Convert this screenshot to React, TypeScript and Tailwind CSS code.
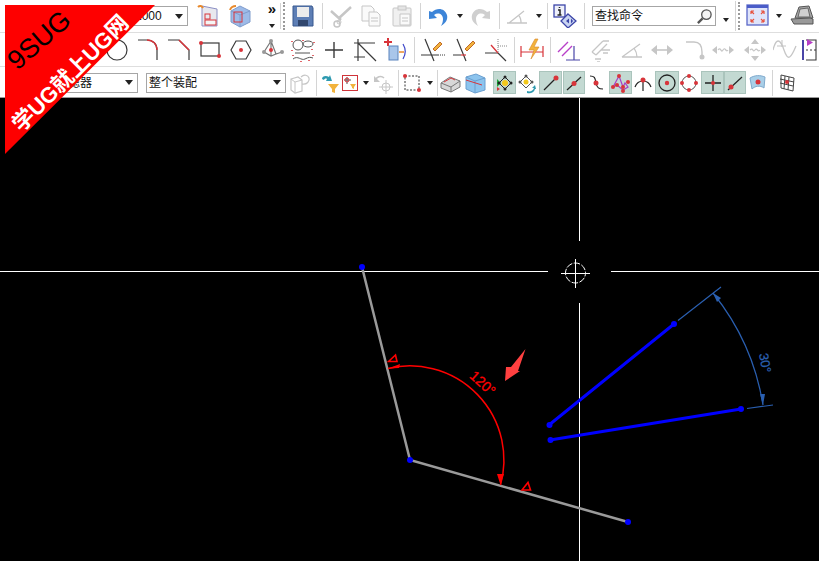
import type { ReactNode } from "react"

const cjk = "font-['Liberation_Sans','Noto_Sans_CJK_SC',sans-serif]"

// one toolbar glyph, drawn on a 24 box
function I({ c = "", children }: { c?: string; children: ReactNode }) {
  return (
    <svg viewBox="0 0 24 24" fill="none" className={`shrink-0 w-6 h-6 ${c}`}>
      {children}
    </svg>
  )
}

function Small({ c = "", children }: { c?: string; children: ReactNode }) {
  return (
    <svg viewBox="0 0 20 24" fill="none" className={`shrink-0 w-5 h-6 ${c}`}>
      {children}
    </svg>
  )
}

function Sep({ c = "" }: { c?: string }) {
  return <div className={`shrink-0 w-px h-[26px] bg-[#d4d4d4] ${c}`} />
}

function Grip({ c = "" }: { c?: string }) {
  return <div className={`shrink-0 w-[3px] h-[28px] border-l-2 border-dotted border-[#9a9a9a] ${c}`} />
}

function Drop({ c = "" }: { c?: string }) {
  return <div className={`shrink-0 w-0 h-0 border-x-[3.5px] border-x-transparent border-t-[4px] border-t-[#222] ${c}`} />
}

function Combo({ c = "", text, pad = "pl-1" }: { c?: string; text: string; pad?: string }) {
  return (
    <div className={`shrink-0 h-5 border border-[#a6a6a6] bg-white flex items-center justify-between pr-1 text-xs text-[#111] ${pad} ${c} ${cjk}`}>
      <span className="whitespace-nowrap">{text}</span>
      <div className="w-0 h-0 border-x-[4.5px] border-x-transparent border-t-[5px] border-t-[#222]" />
    </div>
  )
}

function Toggle({ c = "", children }: { c?: string; children: ReactNode }) {
  return (
    <div className={`shrink-0 h-[23px] bg-[#c3d9d2] border border-[#aac4bc] flex items-center justify-center ${c}`}>
      <svg viewBox="0 0 20 20" fill="none" className="w-5 h-5">
        {children}
      </svg>
    </div>
  )
}

const Dot = ({ x, y, r = 2 }: { x: number; y: number; r?: number }) => <circle cx={x} cy={y} r={r} fill="#d8343a" />
const dark = "#3a3a3a"
const off = "#c6c6c6"

function Row1() {
  return (
    <div className="h-[33px] border-b border-[#dedede] flex items-center overflow-hidden">
      <Combo c="ml-[100px] w-[88px]" text="0.1000" pad="pl-6" />
      <I c="ml-[9px]">
        <path d="M5 2l15 3v17H5z" fill="#e8e8ee" stroke="#8b8fc4" />
        <path d="M1 3c2-2 4-1 5 1" stroke="#e8892c" strokeWidth="2" />
        <rect x="8" y="10" width="5" height="5" stroke="#d8343a" />
        <rect x="8" y="16" width="11" height="5" stroke="#d8343a" fill="#f5f5f5" />
      </I>
      <I c="ml-[7px]">
        <path d="M3 7l9-5 10 5v11l-10 5-9-5z" fill="#9dbbe8" stroke="#7f9ccc" />
        <path d="M3 7l9 4 10-4M12 11v12" stroke="#7f9ccc" />
        <rect x="6" y="8" width="8" height="10" stroke="#d8343a" />
        <path d="M2 6c1-3 4-4 6-4" stroke="#e8892c" strokeWidth="2" />
      </I>
      <div className="ml-[13px] w-[14px] h-6 shrink-0 flex flex-col items-center justify-between">
        <span className="text-[15px] leading-[10px] font-bold text-[#111] font-['Liberation_Sans',sans-serif]">»</span>
        <Drop />
      </div>
      <Sep c="ml-px" />
      <Grip c="ml-[2px]" />
      <I c="ml-[5px]">
        <path d="M2 2h19l1 2v18H2z" fill="#5d7eb5" stroke="#38598f" />
        <rect x="6" y="3" width="12" height="10" fill="#ececec" />
        <rect x="7" y="16" width="10" height="6" fill="#30466e" />
      </I>
      <Sep c="ml-[7px]" />
      <I c="ml-[5px]">
        <path d="M3 7l10 9M23 3L10 15" stroke={off} strokeWidth="2.5" />
        <circle cx="9" cy="20" r="3" stroke={off} strokeWidth="1.5" />
        <circle cx="11" cy="18" r="2" stroke={off} />
      </I>
      <I c="ml-[7px]">
        <path d="M3 2h9l3 3v12H3z" fill="#fafafa" stroke={off} />
        <path d="M10 8h8l3 3v11H10z" fill="#fafafa" stroke={off} />
        <path d="M12 14h7M12 17h7" stroke={off} />
      </I>
      <I c="ml-[7px]">
        <rect x="3" y="4" width="18" height="18" rx="1" fill="#f0f0f0" stroke={off} />
        <rect x="8" y="2" width="8" height="4" fill="#e4e4e4" stroke={off} />
        <path d="M10 10h10v11H10zM12 14h6M12 17h6" stroke={off} fill="#fafafa" />
      </I>
      <Sep c="ml-[6px]" />
      <I c="ml-[5px]">
        <path d="M3 7l0 8 8-1-3-3c4-3 9-1 9 4 0 3-1 5-2 7 5-3 7-7 6-11-2-7-10-8-15-3z" fill="#3d85d8" />
      </I>
      <Drop c="ml-[7px]" />
      <I c="ml-[6px]">
        <path d="M21 7l0 8-8-1 3-3c-4-3-9-1-9 4 0 3 1 5 2 7-5-3-7-7-6-11 2-7 10-8 15-3z" fill="#cfcfcf" />
      </I>
      <Sep c="ml-[6px]" />
      <I c="ml-[5px]">
        <path d="M2 19h20M4 19L19 7M14 12c2 2 2 5 2 7" stroke={off} strokeWidth="1.3" />
      </I>
      <Drop c="ml-[7px]" />
      <Sep c="ml-[5px]" />
      <I c="ml-[5px]">
        <rect x="1" y="1" width="11" height="12" fill="#eef0fa" stroke="#3c45a8" strokeWidth="1.3" />
        <path d="M6.500 3v1M5 6h2v5M4.500 11h4" stroke="#222" strokeWidth="1.500" />
        <path d="M15 10l8 7-8 7-7-7z" fill="#c9d4f2" stroke="#3c45a8" strokeWidth="1.3" />
        <path d="M13 17l3-2.500v5zM18 14.500v5l2-2.500z" fill="#3c45a8" />
      </I>
      <Sep c="ml-[7px]" />
      <div className={`ml-[7px] shrink-0 w-[124px] h-5 border border-[#a6a6a6] bg-white flex items-center justify-between pl-[2px] pr-[2px] text-xs text-[#111] ${cjk}`}>
        <span className="whitespace-nowrap">查找命令</span>
        <svg viewBox="0 0 18 18" fill="none" className="w-[17px] h-[17px]">
          <circle cx="11" cy="7" r="5" fill="#f4f4f4" stroke="#555" strokeWidth="1.4" />
          <path d="M7 11l-5 5" stroke="#555" strokeWidth="2.4" />
        </svg>
      </div>
      <Drop c="ml-[7px] mt-[8px]" />
      <Sep c="ml-[6px] h-[30px]" />
      <Grip c="ml-[2px]" />
      <I c="ml-[5px]">
        <rect x="1" y="1" width="21" height="20" fill="#dfe4fa" stroke="#5a68c8" strokeWidth="1.3" />
        <rect x="1" y="1" width="21" height="3" fill="#4a5cc8" />
        <path d="M5 7l3 3M5 7h3M5 7v3M18 7l-3 3M18 7h-3M18 7v3M5 18l3-3M5 18h3M5 18v-3M18 18l-3-3M18 18h-3M18 18v-3" stroke="#e8503c" strokeWidth="1.2" />
      </I>
      <Drop c="ml-[6px]" />
      <I c="ml-[8px]">
        <path d="M5 14l4-11 10-1 4 12z" fill="#a8a8a8" stroke="#555" />
        <path d="M1 15l19-1 3 1v5H4z" fill="#999" stroke="#555" />
        <path d="M8 13l2-8 8-1 2 9z" fill="#d0d0d0" stroke="#666" />
      </I>
    </div>
  )
}

function Row2() {
  return (
    <div className="h-[34px] border-b border-[#dedede] flex items-center overflow-hidden">
      <I c="ml-[105px]">
        <circle cx="12" cy="12" r="10" stroke={dark} strokeWidth="1.2" />
      </I>
      <I c="ml-[7px]">
        <path d="M2 2h9c6 0 10 4 10 10v10" stroke={dark} strokeWidth="1.2" />
        <path d="M11 2c6 0 10 4 10 10" stroke="#d8343a" strokeWidth="1.3" />
      </I>
      <I c="ml-[7px]">
        <path d="M1 2h11l10 10v10" stroke={dark} strokeWidth="1.2" />
        <path d="M12 2l10 10" stroke="#d8343a" strokeWidth="1.5" />
      </I>
      <I c="ml-[7px]">
        <rect x="3" y="5" width="18" height="13" stroke={dark} strokeWidth="1.2" />
        <Dot x={3} y={5} />
        <Dot x={21} y={18} />
      </I>
      <I c="ml-[7px]">
        <path d="M2 12l5-9h10l5 9-5 9H7z" stroke={dark} strokeWidth="1.2" />
        <Dot x={12} y={12} />
      </I>
      <I c="ml-[7px]">
        <path d="M4 14l7-11 5 13 6-2M4 14l7 4 5-2M11 3l0 15" stroke="#777" strokeWidth="1.2" />
        <circle cx="4" cy="14" r="2" fill="#999" />
        <circle cx="11" cy="3" r="2" fill="#999" />
        <circle cx="22" cy="14" r="2" fill="#999" />
        <Dot x={11} y={12} />
      </I>
      <I c="ml-[7px]">
        <ellipse cx="7" cy="7" rx="5" ry="5" stroke="#555" />
        <ellipse cx="17" cy="6" rx="5" ry="3" stroke="#555" />
        <path d="M4 15h15M2 21c5-4 8 2 12 0s5-2 8-1" stroke="#555" />
        <path d="M1 3v1M12 2v1M23 4v1M1 12v1M21 11v1M2 17v1M22 17v1M10 23v1M18 22v1" stroke="#d8343a" strokeWidth="1.5" />
      </I>
      <I c="ml-[7px]">
        <path d="M12 4v16M3 12h18" stroke={dark} strokeWidth="1.4" />
      </I>
      <I c="ml-[7px]">
        <path d="M5 1v22M1 5h21M1 19h11M5 5l18 18" stroke={dark} strokeWidth="1.2" />
      </I>
      <I c="ml-[7px]">
        <path d="M0 4h8M4 0v8" stroke="#d8343a" strokeWidth="2" />
        <rect x="5" y="8" width="9" height="14" fill="#a9c6ea" stroke="#5b84bd" />
        <path d="M15 14h5" stroke="#e8892c" strokeWidth="1.5" />
        <path d="M19 6c3 5 3 10 0 15" stroke="#3c45c8" strokeWidth="1.2" />
      </I>
      <Sep c="ml-[6px]" />
      <I c="ml-[6px]">
        <path d="M4 1l9 22M0 17h17" stroke={dark} strokeWidth="1.2" />
        <path d="M17 17h7" stroke={dark} strokeDasharray="1 1" />
        <path d="M12 11l7-7 2 2-7 7z" fill="#f2b33c" stroke="#c06a2a" />
      </I>
      <I c="ml-[8px]">
        <path d="M4 1l9 22M0 17h8" stroke={dark} strokeWidth="1.2" />
        <path d="M8 17h5" stroke="#d8343a" strokeWidth="1.2" />
        <path d="M12 11l8-8 2 2-8 8z" fill="#f2b33c" stroke="#c06a2a" />
      </I>
      <I c="ml-[8px]">
        <path d="M0 15h13M13 15l8 8" stroke={dark} strokeWidth="1.2" />
        <path d="M6 7l7 8" stroke="#d8343a" strokeWidth="1.3" />
        <path d="M13 1v14M13 8h9" stroke="#888" strokeDasharray="1 1" />
      </I>
      <Sep c="ml-[5px]" />
      <I c="ml-[5px]">
        <path d="M1 8v11M23 8v11M1 14h22" stroke="#d8343a" strokeWidth="1.2" />
        <path d="M15 1l-6 11h5l-3 9 8-12h-5l4-8z" fill="#f2b33c" stroke="#d8862a" strokeWidth=".6" />
      </I>
      <Sep c="ml-[6px]" />
      <I c="ml-[5px]">
        <path d="M2 14L12 4M6 18L16 8" stroke="#b83fc8" strokeWidth="1.4" />
        <path d="M18 8v14M10 22h14" stroke="#4a46a8" strokeWidth="1.2" />
      </I>
      <I c="ml-[8px]">
        <path d="M4 14L15 3M8 17L19 6M4 14l4 3M15 3h6M7 21h6M9 24h3M13 12h9M15 15h5" stroke={off} strokeWidth="1.3" />
      </I>
      <I c="ml-[8px]">
        <path d="M2 19h20M2 19L20 6M14 10c2 3 3 6 3 9" stroke={off} strokeWidth="1.3" />
      </I>
      <I c="ml-[6px]">
        <path d="M4 12h16" stroke={off} strokeWidth="1.6" />
        <path d="M1 12l6-5v10zM23 12l-6-5v10z" fill={off} />
      </I>
      <I c="ml-[9px]">
        <path d="M3 4h8c6 0 8 4 8 10v4" stroke={off} strokeWidth="1.4" />
        <circle cx="19" cy="19" r="2.500" fill={off} />
      </I>
      <I c="ml-[4px]">
        <path d="M7 12c3-4 3 4 5 0s3 3 5 0" stroke={off} strokeWidth="1.2" />
        <path d="M1 12l5-4v8zM23 12l-5-4v8z" fill={off} />
      </I>
      <I c="ml-[8px]">
        <path d="M7 12c3-3 3 3 5 0s3 3 5 0" stroke={off} strokeWidth="1.2" />
        <path d="M1 12l5-4v8zM23 12l-5-4v8zM12 1l-4 5h8zM12 23l-4-5h8z" fill={off} />
      </I>
      <I c="ml-[6px]">
        <path d="M0 12c3-12 7-12 11 0s7 8 12-4" stroke={off} strokeWidth="1.3" />
        <path d="M4 8h9M9 2v7" stroke={off} strokeWidth="1.1" />
      </I>
      <I c="ml-[3px]">
        <rect x="2" y="2" width="2" height="20" fill="#4a46a8" />
        <path d="M6 2h10v20H6" stroke={dark} strokeWidth="1.1" />
        <path d="M7 1v7l6-3.500z" fill="#b83fc8" />
        <path d="M6 12h12" stroke={dark} strokeDasharray="2 2" />
      </I>
    </div>
  )
}

function Row3() {
  return (
    <div className="h-[31px] pt-px border-b border-[#9a9a9a] flex items-center overflow-hidden">
      <Combo c="ml-[6px] w-[132px]" text="没有选择过滤器" pad="pl-[1px]" />
      <Combo c="ml-[8px] w-[140px]" text="整个装配" pad="pl-[2px]" />
      <I c="ml-[2px]">
        <path d="M3 8l7-2 4 3v11l-7 2-4-3zM13 6c3-3 7-2 8 1s-2 7-7 6" stroke={off} strokeWidth="1.2" />
        <path d="M3 8l4 3v11M7 11l7-2" stroke={off} />
      </I>
      <Sep c="ml-[4px]" />
      <Small c="ml-[3px]">
        <path d="M2 8c0-3 4-4 7-2l1-2 2 6-6 0 1-2c-1-1-3 0-3 1z" fill="#2e9ab0" />
        <path d="M8 13h11l-4 5v4l-3-1v-3z" fill="#f2b33c" />
      </Small>
      <div className="ml-[2px] shrink-0 w-4 h-4 border border-[#d0343a] bg-white flex items-center justify-center">
        <svg viewBox="0 0 14 14" fill="none" className="w-[14px] h-[14px]">
          <path d="M4 1v7M1 4h7" stroke="#555" />
          <circle cx="4" cy="4" r="2" stroke="#d8343a" />
          <path d="M7 8h6l-2 3v2l-2-1v-1z" fill="#f2b33c" />
        </svg>
      </div>
      <Drop c="ml-[5px]" />
      <I c="ml-[3px]">
        <path d="M4 9c0-3 5-5 8-2" stroke={off} strokeWidth="1.6" />
        <path d="M2 5v6h6z" fill={off} />
        <circle cx="14" cy="16" r="4" stroke={off} />
        <path d="M14 9v14M7 16h14" stroke={off} />
      </I>
      <Sep c="ml-[2px]" />
      <Small c="ml-[3px]">
        <rect x="3" y="5" width="14" height="14" stroke="#333" strokeDasharray="2 1.500" />
        <Dot x={3} y={5} />
        <Dot x={17} y={19} />
      </Small>
      <Drop c="ml-[5px]" />
      <Sep c="ml-[4px]" />
      <I c="ml-px">
        <path d="M2 12l9-6 10 4v6l-9 5-10-4z" fill="#d8d8d8" stroke="#777" />
        <path d="M2 12l10 4 9-6M12 16v5" stroke="#777" />
        <path d="M5 11l7-4 4 2" stroke="#d8343a" />
      </I>
      <I>
        <path d="M3 6l10-3 9 4v12l-10 3-9-4z" fill="#8cc4ee" stroke="#6a9fd0" />
        <path d="M3 6l9 4 10-3M12 10v12" stroke="#6a9fd0" />
        <path d="M3 9l16 5" stroke="#d8343a" />
      </I>
      <Toggle c="ml-[6px] w-[23px]">
        <path d="M2 6v8l4-4z" fill="#18a838" />
        <path d="M2 14v4l3-2z" fill="#d8343a" />
        <path d="M10 4l6 6-6 6-6-6z" stroke="#222" />
        <circle cx="10" cy="10" r="3" fill="#f2c81c" />
        <circle cx="10" cy="4" r="1.500" fill="#222" />
        <circle cx="16" cy="10" r="1.500" fill="#222" />
        <circle cx="10" cy="16" r="1.500" fill="#222" />
        <circle cx="4" cy="10" r="1.500" fill="#222" />
      </Toggle>
      <Small>
        <path d="M10 5l6 6-6 6-6-6z" stroke="#555" />
        <circle cx="10" cy="11" r="2.500" fill="#f2c81c" />
        <circle cx="10" cy="5" r="1.500" fill="#555" />
        <circle cx="16" cy="11" r="1.500" fill="#555" />
        <circle cx="4" cy="11" r="1.500" fill="#555" />
        <path d="M11 20c3 1 6 0 7-3l-2 0 3-3 1 4h-1c-1 4-5 5-8 4z" fill="#2e9ab0" />
      </Small>
      <Toggle c="ml-[3px] w-[23px]">
        <path d="M3 17L16 4" stroke="#222" strokeWidth="1.2" />
        <Dot x={15} y={5} r={2.5} />
      </Toggle>
      <Toggle c="ml-px w-[22px]">
        <path d="M3 17L17 4" stroke="#222" strokeWidth="1.2" />
        <Dot x={10} y={10.500} r={2.5} />
      </Toggle>
      <Small c="ml-px">
        <path d="M4 5c5 0 5 2 6 7s3 6 7 6" stroke="#222" strokeWidth="1.2" />
        <Dot x={10} y={12} r={2.500} />
      </Small>
      <Toggle c="ml-[3px] w-[23px]">
        <path d="M2 14L8 3l4 11 2-4 3 4-5 3-6-5z" stroke="#a63fc8" strokeWidth="1.2" />
        <Dot x={2} y={14} />
        <Dot x={8} y={3} />
        <Dot x={12} y={14} />
        <Dot x={17} y={9} />
        <Dot x={12} y={18} />
        <Dot x={6} y={12} />
      </Toggle>
      <Small c="ml-px">
        <path d="M2 16c3-8 13-8 16 0M10 9v11" stroke="#222" strokeWidth="1.2" />
        <Dot x={10} y={9} r={2.500} />
      </Small>
      <Toggle c="ml-[2px] w-6">
        <circle cx="10" cy="10" r="8" stroke="#222" strokeWidth="1.3" />
        <Dot x={10} y={10} r={2.2} />
      </Toggle>
      <Small>
        <circle cx="10" cy="12" r="7" stroke="#555" />
        <Dot x={10} y={5} />
        <Dot x={3} y={12} />
        <Dot x={17} y={12} />
        <Dot x={10} y={19} />
      </Small>
      <Toggle c="ml-[2px] w-[23px]">
        <path d="M10 2v16M2 10h16" stroke="#222" strokeWidth="1.3" />
        <Dot x={10} y={10} />
      </Toggle>
      <Toggle c="w-[22px]">
        <path d="M3 17L17 4" stroke="#222" strokeWidth="1.2" />
        <Dot x={6} y={14} r={2.5} />
      </Toggle>
      <Small c="ml-px">
        <path d="M3 7c5-3 10-3 15-1l-1 11c-4-3-9-2-12 1z" fill="#a9cfe8" stroke="#7fa9cc" />
        <Dot x={11} y={11} r={2.500} />
      </Small>
      <Sep c="ml-[5px]" />
      <I c="ml-[2px]">
        <path d="M6 4l13 3-1 13-12-3zM10 5l-1 13M14 6l-1 13M5 8l14 3M5 12l13 3" stroke="#444" />
        <Dot x={12} y={11} />
      </I>
    </div>
  )
}

function Canvas() {
  const blue = "#2a5fb0"
  return (
    <div className="flex-1 bg-black overflow-hidden">
      <svg viewBox="0 98 819 463" className="block w-[819px] h-[463px]" fill="none">
        <path d="M0 271.500H548M611 271.500H819M579.500 98V241M579.500 303V561" stroke="#fff" />
        <circle cx="575.500" cy="273" r="10" stroke="#fff" strokeDasharray="6.500 1.500" strokeDashoffset="3" />
        <path d="M561 273.500H590M575.500 259V288" stroke="#fff" />

        <path d="M362 267L410 460L628 522" stroke="#9a9a9a" strokeWidth="2.500" />
        <circle cx="362" cy="267" r="3" fill="#0000ff" />
        <circle cx="410" cy="460" r="3" fill="#0000ff" />
        <circle cx="628" cy="522" r="3" fill="#0000ff" />

        <path d="M388 368.500A94 94 0 0 1 500.500 485" stroke="#ff0000" strokeWidth="1.500" />
        <path d="M388 368.500L400 364L399 368zM500.500 485L497 474L504 474z" fill="#ff0000" />
        <path d="M388.500 361.500L395.500 355L397 361.500z" stroke="#ff0000" strokeWidth="1.600" />
        <path d="M522 490L528 482.500L530.500 490z" stroke="#ff0000" strokeWidth="1.600" />
        <text x="482" y="384" fill="#ff0000" stroke="#ff0000" strokeWidth=".3" fontSize="14" textAnchor="middle" dominantBaseline="middle" transform="rotate(42 482 384)" className="font-['Liberation_Sans',sans-serif]">120°</text>
        <path d="M505 381L506 367L511 367L525.500 349L518 371L520 371z" fill="#ff4040" />

        <path d="M549 425L674 324M550 440L741 409" stroke="#0000ff" strokeWidth="3" />
        <circle cx="549.500" cy="425" r="3" fill="#0000ff" />
        <circle cx="674" cy="324" r="3" fill="#0000ff" />
        <circle cx="550.500" cy="440" r="3" fill="#0000ff" />
        <circle cx="741" cy="409" r="3" fill="#0000ff" />

        <path d="M678 320.500L721 287M747 408.500L773 405" stroke={blue} strokeWidth="1.200" />
        <path d="M713 293A240 240 0 0 1 763 405" stroke={blue} strokeWidth="1.200" />
        <path d="M713 293L721 298L717 302zM763 405L760 394L765 394z" fill={blue} />
        <text x="764" y="363" fill={blue} stroke={blue} strokeWidth=".3" fontSize="13" textAnchor="middle" dominantBaseline="middle" transform="rotate(80 764 363)" className="font-['Liberation_Sans',sans-serif]">30°</text>
      </svg>
    </div>
  )
}

export default function App() {
  return (
    <div className="relative w-[819px] h-[561px] overflow-hidden bg-white flex flex-col">
      <Row1 />
      <Row2 />
      <Row3 />
      <Canvas />

      <div className="absolute left-[5px] top-[5px] w-[150px] h-[149px] bg-[#fe0000] [clip-path:polygon(0_0,100%_0,0_100%)]" />
      <div className="absolute left-[-1px] top-[22px] w-20 h-9 flex items-center justify-center -rotate-[41deg] text-[27px] text-black whitespace-nowrap font-['Liberation_Sans',sans-serif]">
        9SUG
      </div>
      <div className={`absolute left-[-15px] top-[57px] w-[170px] h-8 flex items-center justify-center -rotate-45 text-[22px] font-bold text-white whitespace-nowrap ${cjk}`}>
        学UG就上UG网
      </div>
    </div>
  )
}
